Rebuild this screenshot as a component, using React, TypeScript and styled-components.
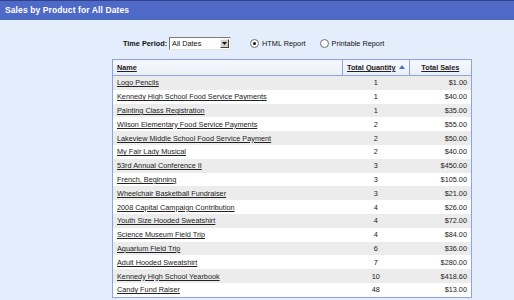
import styled, { createGlobalStyle } from 'styled-components';

const GlobalStyle = createGlobalStyle`
  html, body {
    margin: 0;
    padding: 0;
    background-color: #e3edfc;
    font-family: 'Liberation Sans', Arial, sans-serif;
  }
`;

const Page = styled.div`
  width: 514px;
  height: 300px;
  overflow: hidden;
  background-color: #e3edfc;
`;

const TitleBar = styled.div`
  height: 19px;
  border-top: 1px solid #2f4290;
  background-color: #4f69c6;
  color: #ffffff;
  font-weight: bold;
  font-size: 8.5px;
  line-height: 19px;
  padding-left: 5px;
  letter-spacing: 0.1px;
`;

const Controls = styled.div`
  display: flex;
  align-items: center;
  height: 13px;
  margin-top: 17px;
  padding-left: 123px;
  font-size: 7.3px;
  color: #111;
`;

const Label = styled.span`
  font-weight: bold;
  margin-right: 2px;
`;

const FakeSelect = styled.div`
  width: 58px;
  height: 11px;
  background-color: #ffffff;
  border: 1px solid;
  border-color: #7a7a7a #e6e6e6 #e6e6e6 #7a7a7a;
  display: flex;
  align-items: center;
  justify-content: space-between;
  padding-left: 2px;
`;

const SelectButton = styled.span`
  width: 9px;
  height: 9px;
  margin-right: 1px;
  background-color: #d4d0c8;
  border: 1px solid;
  border-color: #f4f4f4 #404040 #404040 #f4f4f4;
  display: flex;
  align-items: center;
  justify-content: center;
  box-sizing: border-box;
`;

const RadioOption = styled.label<{ $gap: number }>`
  display: flex;
  align-items: center;
  margin-left: ${(p) => p.$gap}px;
  gap: 3px;
`;

const Radio = styled.span<{ $checked: boolean }>`
  width: 7px;
  height: 7px;
  border-radius: 50%;
  background-color: #ffffff;
  border: 1px solid #707070;
  display: flex;
  align-items: center;
  justify-content: center;

  &::after {
    content: '';
    width: 3px;
    height: 3px;
    border-radius: 50%;
    background-color: ${(p) => (p.$checked ? '#111' : 'transparent')};
  }
`;

const TableWrap = styled.div`
  margin-top: 9px;
  padding-left: 112px;
`;

const Table = styled.table`
  width: 360px;
  border-collapse: collapse;
  border: 1px solid #8aa6dd;
  font-size: 7.3px;
  color: #222;
`;

const Th = styled.th<{ $align: 'left' | 'center' }>`
  height: 15px;
  padding: 0 4px;
  text-align: ${(p) => p.$align};
  background: linear-gradient(#f6f8fc, #e9eef7);
  border: 1px solid #8aa6dd;
  font-weight: bold;
  text-decoration: underline;
  white-space: nowrap;
`;

const Row = styled.tr<{ $odd: boolean }>`
  background-color: ${(p) => (p.$odd ? '#ececec' : '#ffffff')};
`;

const Td = styled.td<{ $align: 'left' | 'center' | 'right' }>`
  height: 13.8px;
  padding: 0 4px;
  text-align: ${(p) => p.$align};
  white-space: nowrap;
`;

const Link = styled.span`
  text-decoration: underline;
  color: #222;
`;

const SortArrow = styled.span`
  display: inline-block;
  margin-left: 3px;
  width: 0;
  height: 0;
  border-left: 3.5px solid transparent;
  border-right: 3.5px solid transparent;
  border-bottom: 4px solid #4f6fc8;
  vertical-align: 1px;
`;

const rows: [string, number, string][] = [
  ['Logo Pencils', 1, '$1.00'],
  ['Kennedy High School Food Service Payments', 1, '$40.00'],
  ['Painting Class Registration', 1, '$35.00'],
  ['Wilson Elementary Food Service Payments', 2, '$55.00'],
  ['Lakeview Middle School Food Service Payment', 2, '$50.00'],
  ['My Fair Lady Musical', 2, '$40.00'],
  ['53rd Annual Conference II', 3, '$450.00'],
  ['French, Beginning', 3, '$105.00'],
  ['Wheelchair Basketball Fundraiser', 3, '$21.00'],
  ['2008 Capital Campaign Contribution', 4, '$26.00'],
  ['Youth Size Hooded Sweatshirt', 4, '$72.00'],
  ['Science Museum Field Trip', 4, '$84.00'],
  ['Aquarium Field Trip', 6, '$36.00'],
  ['Adult Hooded Sweatshirt', 7, '$280.00'],
  ['Kennedy High School Yearbook', 10, '$418.60'],
  ['Candy Fund Raiser', 48, '$13.00'],
];

export default function App() {
  return (
    <Page>
      <GlobalStyle />
      <TitleBar>Sales by Product for All Dates</TitleBar>
      <Controls>
        <Label>Time Period:</Label>
        <FakeSelect>
          <span>All Dates</span>
          <SelectButton>
            <svg width="5" height="3" viewBox="0 0 5 3">
              <path d="M0 0h5L2.5 3z" fill="#111" />
            </svg>
          </SelectButton>
        </FakeSelect>
        <RadioOption $gap={19}>
          <Radio $checked />
          HTML Report
        </RadioOption>
        <RadioOption $gap={14}>
          <Radio $checked={false} />
          Printable Report
        </RadioOption>
      </Controls>
      <TableWrap>
        <Table>
          <thead>
            <tr>
              <Th $align="left" style={{ width: 221 }}>Name</Th>
              <Th $align="center" style={{ width: 57 }}>
                Total Quantity
                <SortArrow />
              </Th>
              <Th $align="center">Total Sales</Th>
            </tr>
          </thead>
          <tbody>
            {rows.map(([name, qty, sales], i) => (
              <Row key={name} $odd={i % 2 === 0}>
                <Td $align="left">
                  <Link>{name}</Link>
                </Td>
                <Td $align="center">{qty}</Td>
                <Td $align="right">{sales}</Td>
              </Row>
            ))}
          </tbody>
        </Table>
      </TableWrap>
    </Page>
  );
}
